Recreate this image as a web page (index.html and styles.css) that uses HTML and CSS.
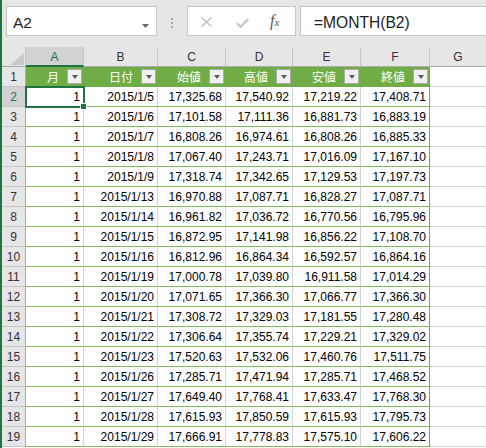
FILE: index.html
```html
<!DOCTYPE html>
<html lang="ja">
<head>
<meta charset="utf-8">
<title>Excel</title>
<link rel="stylesheet" href="styles.css">
</head>
<body>
<div class="app">
  <div class="fbar">
    <div class="namebox">
      <span class="nb-text">A2</span>
      <svg class="nb-caret" width="7" height="4" viewBox="0 0 7 4"><path d="M0 0H7L3.5 4Z" fill="#6a6a6a"/></svg>
    </div>
    <div class="grip"><i></i><i></i><i></i></div>
    <div class="fxbox">
      <svg class="ic-x" width="11" height="10" viewBox="0 0 11 10"><path d="M0.5 0.5L10.5 9.5M10.5 0.5L0.5 9.5" stroke="#c3c3c3" stroke-width="1.5" fill="none"/></svg>
      <svg class="ic-ok" width="13" height="10" viewBox="0 0 13 10"><path d="M0.8 5L4.6 8.8L12.3 1" stroke="#c3c3c3" stroke-width="2" fill="none"/></svg>
      <span class="fx">f<span class="fx-x">x</span></span>
    </div>
    <div class="formula">=MONTH(B2)</div>
  </div>

  <div class="sheet">
    <div class="corner"><svg width="14" height="12" viewBox="0 0 14 12"><path d="M14 0V12H0Z" fill="#c9c9c9"/></svg></div>
    <div class="ch sel">A</div>
    <div class="ch">B</div>
    <div class="ch">C</div>
    <div class="ch">D</div>
    <div class="ch">E</div>
    <div class="ch">F</div>
    <div class="ch">G</div>

    <div class="rh">1</div>
    <div class="th"><span>月</span><i class="dd"></i></div>
    <div class="th"><span>日付</span><i class="dd"></i></div>
    <div class="th"><span>始値</span><i class="dd"></i></div>
    <div class="th"><span>高値</span><i class="dd"></i></div>
    <div class="th"><span>安値</span><i class="dd"></i></div>
    <div class="th last"><span>終値</span><i class="dd"></i></div>
    <div class="g"></div>

    <div class="rh sel">2</div>
    <div class="c active">1<span class="selbox"></span><span class="handle"></span></div>
    <div class="c">2015/1/5</div><div class="c">17,325.68</div><div class="c">17,540.92</div><div class="c">17,219.22</div><div class="c last">17,408.71</div><div class="g"></div>

    <div class="rh">3</div>
    <div class="c">1</div><div class="c">2015/1/6</div><div class="c">17,101.58</div><div class="c">17,111.36</div><div class="c">16,881.73</div><div class="c last">16,883.19</div><div class="g"></div>

    <div class="rh">4</div>
    <div class="c">1</div><div class="c">2015/1/7</div><div class="c">16,808.26</div><div class="c">16,974.61</div><div class="c">16,808.26</div><div class="c last">16,885.33</div><div class="g"></div>

    <div class="rh">5</div>
    <div class="c">1</div><div class="c">2015/1/8</div><div class="c">17,067.40</div><div class="c">17,243.71</div><div class="c">17,016.09</div><div class="c last">17,167.10</div><div class="g"></div>

    <div class="rh">6</div>
    <div class="c">1</div><div class="c">2015/1/9</div><div class="c">17,318.74</div><div class="c">17,342.65</div><div class="c">17,129.53</div><div class="c last">17,197.73</div><div class="g"></div>

    <div class="rh">7</div>
    <div class="c">1</div><div class="c">2015/1/13</div><div class="c">16,970.88</div><div class="c">17,087.71</div><div class="c">16,828.27</div><div class="c last">17,087.71</div><div class="g"></div>

    <div class="rh">8</div>
    <div class="c">1</div><div class="c">2015/1/14</div><div class="c">16,961.82</div><div class="c">17,036.72</div><div class="c">16,770.56</div><div class="c last">16,795.96</div><div class="g"></div>

    <div class="rh">9</div>
    <div class="c">1</div><div class="c">2015/1/15</div><div class="c">16,872.95</div><div class="c">17,141.98</div><div class="c">16,856.22</div><div class="c last">17,108.70</div><div class="g"></div>

    <div class="rh">10</div>
    <div class="c">1</div><div class="c">2015/1/16</div><div class="c">16,812.96</div><div class="c">16,864.34</div><div class="c">16,592.57</div><div class="c last">16,864.16</div><div class="g"></div>

    <div class="rh">11</div>
    <div class="c">1</div><div class="c">2015/1/19</div><div class="c">17,000.78</div><div class="c">17,039.80</div><div class="c">16,911.58</div><div class="c last">17,014.29</div><div class="g"></div>

    <div class="rh">12</div>
    <div class="c">1</div><div class="c">2015/1/20</div><div class="c">17,071.65</div><div class="c">17,366.30</div><div class="c">17,066.77</div><div class="c last">17,366.30</div><div class="g"></div>

    <div class="rh">13</div>
    <div class="c">1</div><div class="c">2015/1/21</div><div class="c">17,308.72</div><div class="c">17,329.03</div><div class="c">17,181.55</div><div class="c last">17,280.48</div><div class="g"></div>

    <div class="rh">14</div>
    <div class="c">1</div><div class="c">2015/1/22</div><div class="c">17,306.64</div><div class="c">17,355.74</div><div class="c">17,229.21</div><div class="c last">17,329.02</div><div class="g"></div>

    <div class="rh">15</div>
    <div class="c">1</div><div class="c">2015/1/23</div><div class="c">17,520.63</div><div class="c">17,532.06</div><div class="c">17,460.76</div><div class="c last">17,511.75</div><div class="g"></div>

    <div class="rh">16</div>
    <div class="c">1</div><div class="c">2015/1/26</div><div class="c">17,285.71</div><div class="c">17,471.94</div><div class="c">17,285.71</div><div class="c last">17,468.52</div><div class="g"></div>

    <div class="rh">17</div>
    <div class="c">1</div><div class="c">2015/1/27</div><div class="c">17,649.40</div><div class="c">17,768.41</div><div class="c">17,633.47</div><div class="c last">17,768.30</div><div class="g"></div>

    <div class="rh">18</div>
    <div class="c">1</div><div class="c">2015/1/28</div><div class="c">17,615.93</div><div class="c">17,850.59</div><div class="c">17,615.93</div><div class="c last">17,795.73</div><div class="g"></div>

    <div class="rh">19</div>
    <div class="c">1</div><div class="c">2015/1/29</div><div class="c">17,666.91</div><div class="c">17,778.83</div><div class="c">17,575.10</div><div class="c last">17,606.22</div><div class="g"></div>
  </div>
</div>
</body>
</html>
```

FILE: styles.css
```css
* { box-sizing: border-box; }

html, body {
  margin: 0;
  padding: 0;
  width: 486px;
  height: 448px;
  overflow: hidden;
  background: #ffffff;
}

.app {
  width: 486px;
  height: 448px;
  border-left: 2px solid #217346;
  overflow: hidden;
  font-family: "Liberation Sans", Arial, sans-serif;
}

/* ---------- formula bar ---------- */
.fbar {
  height: 47px;
  background: #e6e6e6;
  display: flex;
  align-items: flex-start;
  padding: 6px 0 0 4px;
  width: 500px;
}

.namebox {
  width: 151px;
  height: 30px;
  background: #fff;
  border: 1px solid #c6c6c6;
  display: flex;
  align-items: flex-start;
  padding: 4px 0 0 6px;
}
.nb-text {
  font-size: 15.5px;
  line-height: 24px;
  color: #222;
  flex: 1;
}
.nb-caret {
  margin: 13px 7px 0 0;
}

.grip {
  width: 2px;
  margin: 12px 14px 0 14px;
  display: flex;
  flex-direction: column;
  gap: 2px;
}
.grip i {
  display: block;
  width: 2px;
  height: 2px;
  background: #a8a8a8;
}

.fxbox {
  width: 109px;
  height: 30px;
  background: #fff;
  border: 1px solid #c6c6c6;
  display: flex;
  align-items: flex-start;
  padding-left: 13px;
}
.ic-x { margin-top: 10px; }
.ic-ok { margin: 11px 0 0 24px; }
.fx {
  margin: 4px 0 0 21px;
  font-family: "Liberation Serif", "Times New Roman", serif;
  font-style: italic;
  font-size: 16px;
  line-height: 20px;
  color: #555;
}
.fx-x { font-size: 11px; }

.formula {
  flex: 1;
  height: 30px;
  margin-left: 4px;
  background: #fff;
  border: 1px solid #c6c6c6;
  padding: 4px 0 0 13px;
  font-size: 15.6px;
  line-height: 24px;
  color: #222;
}

/* ---------- sheet grid ---------- */
.sheet {
  display: grid;
  grid-template-columns: 24px 58px 74px 68px 67px 68px 69px 57px;
  grid-auto-rows: 20px;
  font-size: 12px;
  line-height: 20px;
  color: #000;
}

.corner {
  background: #e6e6e6;
  border-right: 1px solid #c6c6c6;
  border-bottom: 1px solid #ababab;
  display: flex;
  align-items: flex-end;
  justify-content: flex-end;
  padding: 0 1px 1px 0;
}

.ch {
  background: #e6e6e6;
  border-right: 1px solid #c6c6c6;
  border-bottom: 1px solid #ababab;
  text-align: center;
  color: #333;
}
.ch.sel {
  background: #d2d2d2;
  color: #217346;
  border-bottom: 2px solid #217346;
}

.rh {
  background: #e6e6e6;
  border-right: 1px solid #ababab;
  border-bottom: 1px solid #c6c6c6;
  text-align: center;
  color: #333;
}
.rh.sel {
  background: #d2d2d2;
  color: #217346;
}

.th {
  background: #70ad47;
  border-right: 1px solid #70ad47;
  border-bottom: 1px solid #70ad47;
  display: flex;
  align-items: center;
  justify-content: flex-end;
  gap: 8px;
  padding-right: 1px;
  color: #fff;
  font-family: "Noto Sans CJK JP", "Liberation Sans", sans-serif;
  font-size: 12px;
}
.th span { line-height: 16px; }

.dd {
  display: flex;
  align-items: center;
  justify-content: center;
  width: 15px;
  height: 15px;
  background: #f1f1f1;
  border: 1px solid #ababab;
}
.dd::after {
  content: "";
  width: 0;
  height: 0;
  border-left: 3.5px solid transparent;
  border-right: 3.5px solid transparent;
  border-top: 4px solid #5a5a5a;
}

.c {
  border-right: 1px solid #d4d4d4;
  border-bottom: 1px solid #84b85f;
  text-align: right;
  padding-right: 3px;
  white-space: nowrap;
  background: #fff;
}
.c.last { border-right: 1px solid #70ad47; }

.g {
  border-right: 1px solid #d4d4d4;
  border-bottom: 1px solid #d4d4d4;
  background: #fff;
}

.active { position: relative; }
.selbox {
  position: absolute;
  left: -1px;
  top: -1px;
  right: -2px;
  bottom: -2px;
  border: 2px solid #217346;
}
.handle {
  position: absolute;
  right: -4px;
  bottom: -4px;
  width: 7px;
  height: 7px;
  background: #217346;
  border: 1px solid #fff;
}
```
